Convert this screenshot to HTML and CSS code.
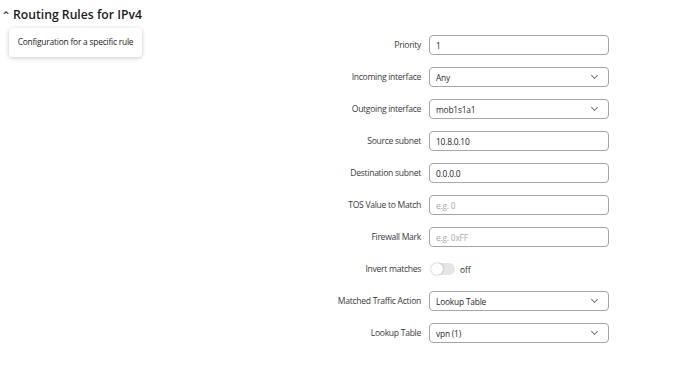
FILE: index.html
```html
<!DOCTYPE html>
<html lang="en">
<head>
    <meta charset="UTF-8">
    <title>Routing Rules for IPv4</title>
    <link rel="stylesheet" href="styles.css">
</head>
<body>
    <div class="section">
        <div class="section-title">
            <span class="caret">&#8963;</span>
            <h2>Routing Rules for IPv4</h2>
        </div>
        <div class="hint">Configuration for a specific rule</div>
        <form class="form">
            <label>Priority</label>
            <div class="field"><input type="text" value="1"></div>

            <label>Incoming interface</label>
            <div class="field select"><span>Any</span><span class="chev"></span></div>

            <label>Outgoing interface</label>
            <div class="field select"><span>mob1s1a1</span><span class="chev"></span></div>

            <label>Source subnet</label>
            <div class="field"><input type="text" value="10.8.0.10"></div>

            <label>Destination subnet</label>
            <div class="field"><input type="text" value="0.0.0.0"></div>

            <label>TOS Value to Match</label>
            <div class="field"><input type="text" placeholder="e.g. 0"></div>

            <label>Firewall Mark</label>
            <div class="field"><input type="text" placeholder="e.g. 0xFF"></div>

            <label>Invert matches</label>
            <div class="toggle-row"><span class="toggle"><span class="knob"></span></span><span>off</span></div>

            <label>Matched Traffic Action</label>
            <div class="field select"><span>Lookup Table</span><span class="chev"></span></div>

            <label>Lookup Table</label>
            <div class="field select"><span>vpn (1)</span><span class="chev"></span></div>
        </form>
    </div>
</body>
</html>
```

FILE: styles.css
```css
body {
    margin: 0;
    background: #fff;
    font-family: 'Open Sans', 'Noto Sans', sans-serif;
    color: #2b2b2b;
}
.section {
    position: relative;
    padding-top: 4px;
}
.section-title {
    display: flex;
    align-items: center;
    height: 20px;
    padding-left: 1px;
}
.caret {
    font-size: 12px;
    width: 12px;
    color: #333;
    line-height: 1;
    margin-top: 4px;
}
h2 {
    margin: 0;
    font-size: 12.2px;
    font-weight: 600;
    color: #1c1c1c;
}
.hint {
    position: absolute;
    left: 9px;
    top: 28px;
    width: 133px;
    height: 29px;
    box-sizing: border-box;
    padding-top: 8px;
    text-align: center;
    font-size: 8.4px;
    letter-spacing: -0.2px;
    color: #222;
    background: #fff;
    border-radius: 4px;
    box-shadow: 0 1px 4px rgba(0,0,0,0.22);
}
.form {
    display: grid;
    grid-template-columns: 421px 180px;
    column-gap: 8px;
    row-gap: 12px;
    margin-top: 11px;
}
label {
    text-align: right;
    font-size: 8.6px;
    letter-spacing: -0.3px;
    line-height: 20px;
    color: #3a3a3a;
}
.field {
    height: 20px;
    box-sizing: border-box;
    border: 1px solid #a6a6ae;
    border-radius: 4px;
    display: flex;
    align-items: center;
    padding: 0 6px;
    font-size: 8.4px;
    letter-spacing: -0.2px;
}
.field input {
    border: none;
    outline: none;
    padding: 0;
    width: 100%;
    font: inherit;
    letter-spacing: inherit;
    color: #222;
    background: transparent;
}
.field input::placeholder {
    color: #aaa;
}
.select {
    justify-content: space-between;
}
.chev {
    width: 4px;
    height: 4px;
    border-right: 1px solid #777;
    border-bottom: 1px solid #777;
    transform: rotate(45deg);
    margin: -3px 5px 0 0;
}
.toggle-row {
    display: flex;
    align-items: center;
    gap: 5px;
    font-size: 8.4px;
    height: 20px;
    padding-left: 2px;
}
.toggle {
    width: 24px;
    height: 12px;
    border-radius: 6px;
    background: #e6e6e6;
    position: relative;
}
.knob {
    position: absolute;
    left: 0;
    top: 0;
    width: 12px;
    height: 12px;
    border-radius: 50%;
    background: #fff;
    box-shadow: 0 0 2px rgba(0,0,0,0.35);
}
```
